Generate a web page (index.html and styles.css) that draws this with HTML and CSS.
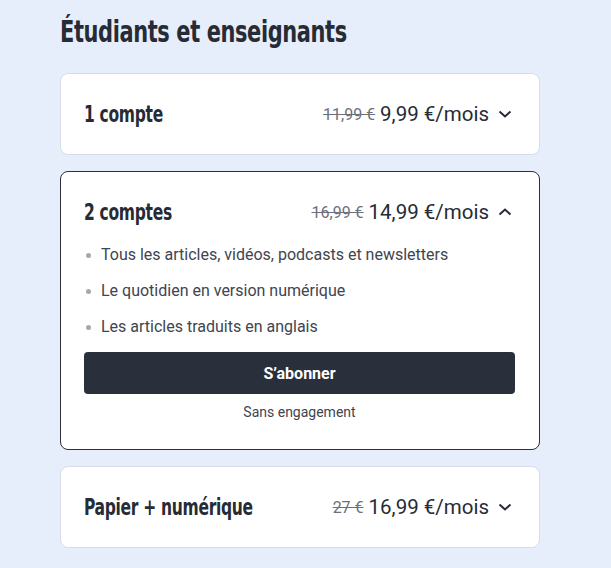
FILE: index.html
```html
<!DOCTYPE html>
<html lang="fr">
<head>
    <meta charset="UTF-8">
    <meta name="viewport" content="width=device-width, initial-scale=1.0">
    <title>Étudiants et enseignants</title>
    <link rel="stylesheet" href="styles.css">
</head>
<body>
    <div class="container">
        <h2 class="titre"><span class="etroit">Étudiants et enseignants</span></h2>

        <!-- Offre 1 compte -->
        <div class="offre">
            <div class="offre-entete">
                <span class="offre-nom etroit">1 compte</span>
                <span class="offre-prix">
                    <s class="ancien">11,99 €</s>
                    <span class="nouveau">9,99 €/mois</span>
                    <svg class="chevron" viewBox="0 0 14 8" width="14" height="8"><path d="M1.5 1.5 L7 6.5 L12.5 1.5" /></svg>
                </span>
            </div>
        </div>

        <!-- Offre 2 comptes (ouverte) -->
        <div class="offre ouverte">
            <div class="offre-entete">
                <span class="offre-nom etroit">2 comptes</span>
                <span class="offre-prix">
                    <s class="ancien">16,99 €</s>
                    <span class="nouveau">14,99 €/mois</span>
                    <svg class="chevron" viewBox="0 0 14 8" width="14" height="8"><path d="M1.5 6.5 L7 1.5 L12.5 6.5" /></svg>
                </span>
            </div>
            <ul class="avantages">
                <li>Tous les articles, vidéos, podcasts et newsletters</li>
                <li>Le quotidien en version numérique</li>
                <li>Les articles traduits en anglais</li>
            </ul>
            <button class="abonner">S’abonner</button>
            <p class="mention">Sans engagement</p>
        </div>

        <!-- Offre papier -->
        <div class="offre">
            <div class="offre-entete">
                <span class="offre-nom etroit">Papier + numérique</span>
                <span class="offre-prix">
                    <s class="ancien">27 €</s>
                    <span class="nouveau">16,99 €/mois</span>
                    <svg class="chevron" viewBox="0 0 14 8" width="14" height="8"><path d="M1.5 1.5 L7 6.5 L12.5 1.5" /></svg>
                </span>
            </div>
        </div>
    </div>
</body>
</html>
```

FILE: styles.css
```css
/* Général */
body {
    font-family: Roboto, "Liberation Sans", sans-serif;
    background: #e6edfb;
    color: #262b35;
    margin: 0;
    padding: 0;
}

.container {
    width: 480px;
    margin: 0 0 0 60px;
    padding-top: 13px;
}

/* Titres en police étroite */
.etroit {
    display: inline-block;
    font-family: "DejaVu Sans Condensed", "DejaVu Sans", sans-serif;
    font-weight: bold;
    transform: scaleX(0.75);
    transform-origin: left center;
    white-space: nowrap;
}

.titre {
    font-size: 31px;
    letter-spacing: -0.5px;
    margin: 0 0 23px;
    color: #262b35;
}

/* Cartes */
.offre {
    background: #fff;
    border: 1px solid #d6dce8;
    border-radius: 8px;
    padding: 23px 24px 23px 23px;
    margin-bottom: 16px;
}

.offre.ouverte {
    border-color: #2a2f3a;
    padding-bottom: 25px;
}

.offre-entete {
    display: flex;
    justify-content: space-between;
    align-items: center;
    height: 34px;
}

.offre-nom {
    font-size: 23px;
    letter-spacing: -0.4px;
}

.offre-prix {
    display: flex;
    align-items: center;
    flex-shrink: 0;
    white-space: nowrap;
}

.ancien {
    font-size: 16px;
    color: #6b707a;
    margin-right: 5px;
}

.nouveau {
    font-size: 20.5px;
    color: #262b35;
}

.chevron {
    margin-left: 9px;
    margin-right: 3px;
    fill: none;
    stroke: #262b35;
    stroke-width: 2;
}

/* Liste */
.avantages {
    list-style: none;
    margin: 8px 0 0;
    padding: 0;
}

.avantages li {
    position: relative;
    font-size: 16px;
    color: #40454f;
    line-height: 20px;
    padding: 8px 0 8px 17px;
}

.avantages li::before {
    content: "";
    position: absolute;
    left: 2px;
    top: 16px;
    width: 5px;
    height: 5px;
    border-radius: 50%;
    background: #a3a7ae;
}

/* Bouton */
.abonner {
    display: block;
    width: 100%;
    height: 42px;
    margin-top: 7px;
    background: #2a303b;
    color: #fff;
    border: none;
    border-radius: 4px;
    font-family: Roboto, "Liberation Sans", sans-serif;
    font-weight: bold;
    font-size: 16px;
    cursor: pointer;
}

.mention {
    text-align: center;
    font-size: 14px;
    color: #40454f;
    margin: 10px 0 4px;
}
```
